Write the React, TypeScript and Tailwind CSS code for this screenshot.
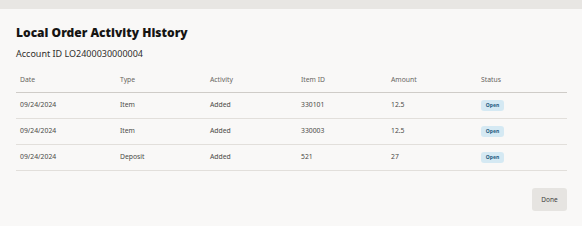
import React from "react";

const rows = [
  { date: "09/24/2024", type: "Item", activity: "Added", itemId: "330101", amount: "12.5" },
  { date: "09/24/2024", type: "Item", activity: "Added", itemId: "330003", amount: "12.5" },
  { date: "09/24/2024", type: "Deposit", activity: "Added", itemId: "521", amount: "27" },
];

const grid = "grid grid-cols-[100px_90px_91px_90px_90px_1fr] items-center pl-[4px]";

export default function App() {
  return (
    <div className="w-[582px] h-[226px] bg-[#f9f8f7] flex flex-col overflow-hidden" style={{ fontFamily: '"Noto Sans", sans-serif' }}>
      <div className="h-[9px] bg-[#e8e6e3] shrink-0" />
      <div className="px-[16px] pt-[16px] flex flex-col">
        <h1 className="text-[12px] leading-[16px] font-black text-[#161513]">
          Local Order Activity History
        </h1>
        <div className="mt-[7px] text-[9px] leading-[12px] text-[#2f2e2c]">Account ID LO2400030000004</div>
        <div className="mt-[8px] w-[551px] text-[6.8px]">
          <div className={`${grid} h-[25px] border-b border-[#cfccc8] text-[#67655f]`}>
            <div>Date</div>
            <div>Type</div>
            <div>Activity</div>
            <div>Item ID</div>
            <div>Amount</div>
            <div>Status</div>
          </div>
          {rows.map((r, i) => (
            <div key={i} className={`${grid} h-[26px] border-b border-[#e2dfdb] text-[#4a4946]`}>
              <div>{r.date}</div>
              <div>{r.type}</div>
              <div>{r.activity}</div>
              <div>{r.itemId}</div>
              <div>{r.amount}</div>
              <div>
                <span className="inline-flex items-center justify-center w-[23px] h-[11px] rounded-[3px] bg-[#d5e9f3] text-[#1f5a80] text-[5px] font-bold">
                  Open
                </span>
              </div>
            </div>
          ))}
        </div>
        <div className="w-[551px] flex justify-end mt-[17px]">
          <button className="w-[35px] h-[23px] rounded-[3px] bg-[#e6e4e1] text-[6.5px] text-[#3f3e3c]">Done</button>
        </div>
      </div>
    </div>
  );
}
